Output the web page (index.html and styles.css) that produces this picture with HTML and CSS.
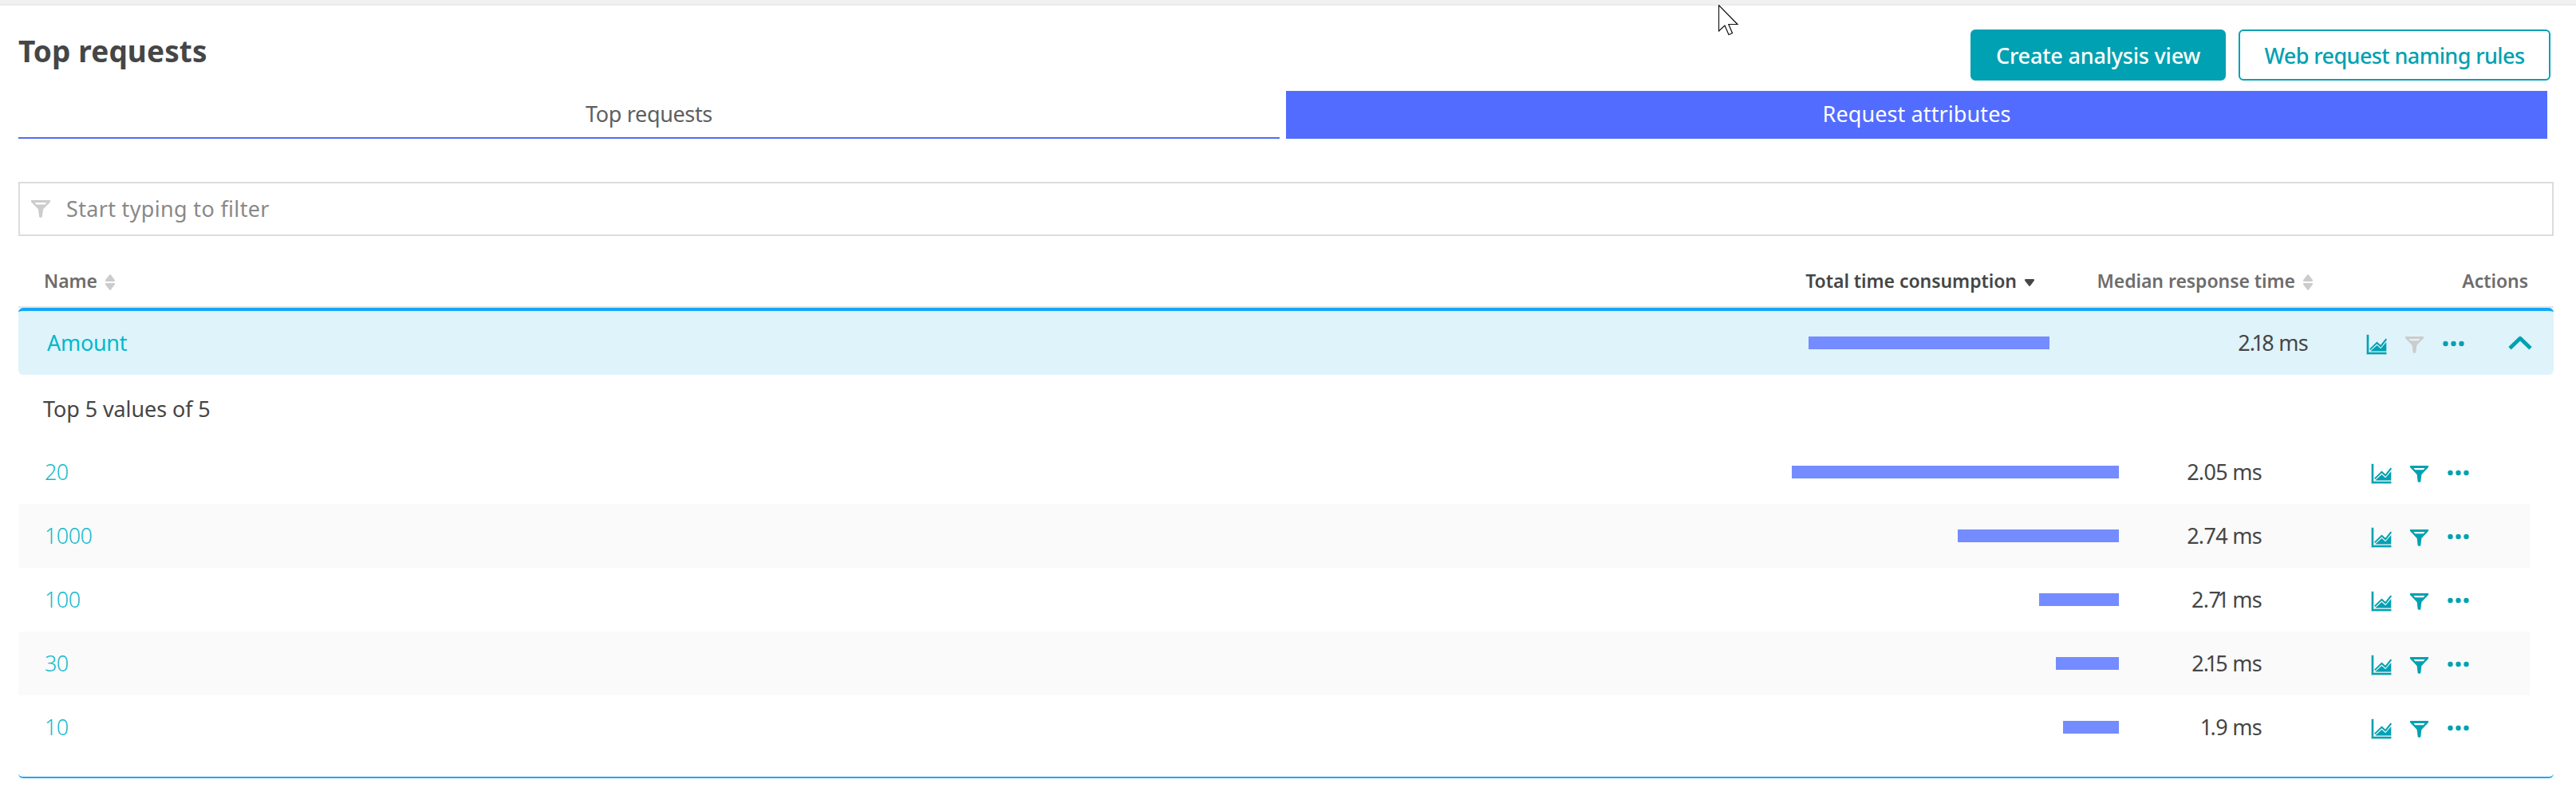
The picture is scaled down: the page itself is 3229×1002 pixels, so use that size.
FILE: index.html
```html
<!DOCTYPE html>
<html lang="en">
<head>
<meta charset="utf-8">
<title>Top requests</title>
<link rel="stylesheet" href="styles.css">
</head>
<body>
<svg class="sprite" aria-hidden="true">
  <symbol id="chart" viewBox="0 0 26 26">
    <path d="M1.9 0.6V24.1H25.5" fill="none" stroke="currentColor" stroke-opacity=".35" stroke-width="3.6"/>
    <path d="M2 0.9V24H25.3" fill="none" stroke="currentColor" stroke-width="2.1"/>
    <path d="M4.7 19.4L13.5 10.9L18.2 15.2L25.3 6.2" fill="none" stroke="currentColor" stroke-width="2"/>
    <path d="M5.2 21.5L13.5 14.1L18.2 18.2L25.3 10V21.5Z" fill="currentColor"/>
  </symbol>
  <symbol id="funnel" viewBox="0 0 23 21">
    <path fill="currentColor" fill-rule="evenodd" d="M0 0H23V2L14.4 11L13.3 20C13.2 21 9.8 21 9.7 20L8.6 11L0 2ZM4.4 2.9L6.3 5.2H16.7L18.6 2.9Z"/>
  </symbol>
  <symbol id="dots" viewBox="0 0 27 8">
    <g fill="currentColor"><circle cx="3.5" cy="4" r="3.2"/><circle cx="13.5" cy="4" r="3.2"/><circle cx="23.5" cy="4" r="3.2"/></g>
  </symbol>
  <symbol id="sort" viewBox="0 0 12 20">
    <path fill="currentColor" d="M5.2 .5Q6 -.4 6.8 .5L11.8 7Q12.4 9 11 9H1Q-.4 9 .2 7ZM5.2 19.5Q6 20.4 6.8 19.5L11.8 13Q12.4 11 11 11H1Q-.4 11 .2 13Z"/>
  </symbol>
  <symbol id="sorted" viewBox="0 0 12 20">
    <path fill="currentColor" d="M5.2 14.5Q6 15.4 6.8 14.5L11.8 8Q12.4 6 11 6H1Q-.4 6 .2 8Z"/>
  </symbol>
</svg>
<svg class="pointer" viewBox="0 0 26 40"><path d="M.5 .5V33L8 26L13 37.5L17.5 35.5L12.8 24.5H24Z" fill="#fff" stroke="#111" stroke-width="1.2"/></svg>
<div class="topbar"></div>
<main class="page">
  <header class="head">
    <h1 class="title">Top requests</h1>
    <div class="buttons">
      <button class="btn btn-primary">Create analysis view</button>
      <button class="btn btn-outline">Web request naming rules</button>
    </div>
  </header>
  <nav class="tabs">
    <a class="tab">Top requests</a>
    <a class="tab tab-active">Request attributes</a>
  </nav>
  <div class="filter">
    <svg class="funnel"><use href="#funnel"/></svg>
    <span>Start typing to filter</span>
  </div>
  <section class="table">
    <div class="cols thead">
      <div class="th">Name<svg class="sort"><use href="#sort"/></svg></div>
      <div class="th th-total">Total time consumption<svg class="sort"><use href="#sorted"/></svg></div>
      <div class="th th-end">Median response time<svg class="sort"><use href="#sort"/></svg></div>
      <div class="th th-actions">Actions</div>
    </div>
    <div class="cols group">
      <a class="group-name">Amount</a>
      <div class="bar-cell"><div class="bar" style="width:302px"></div></div>
      <div class="value">2.<span class="one">1</span>8 ms</div>
      <div class="actions">
        <svg class="chart"><use href="#chart"/></svg>
        <svg class="funnel funnel-off"><use href="#funnel"/></svg>
        <svg class="dots"><use href="#dots"/></svg>
        <svg class="chevron" viewBox="0 0 30 18"><path d="M2 15.8L15 3.2L28 15.8" fill="none" stroke="currentColor" stroke-width="4.8" stroke-linejoin="round"/></svg>
      </div>
    </div>
    <div class="details">
      <p class="caption">Top 5 values of 5</p>
      <div class="row">
        <a class="row-name">20</a>
        <div class="bar-cell"><div class="bar" style="width:410px"></div></div>
        <div class="value">2.05 ms</div>
        <div class="actions"><svg class="chart"><use href="#chart"/></svg><svg class="funnel"><use href="#funnel"/></svg><svg class="dots"><use href="#dots"/></svg></div>
      </div>
      <div class="row">
        <a class="row-name">1000</a>
        <div class="bar-cell"><div class="bar" style="width:202px"></div></div>
        <div class="value">2.74 ms</div>
        <div class="actions"><svg class="chart"><use href="#chart"/></svg><svg class="funnel"><use href="#funnel"/></svg><svg class="dots"><use href="#dots"/></svg></div>
      </div>
      <div class="row">
        <a class="row-name">100</a>
        <div class="bar-cell"><div class="bar" style="width:100px"></div></div>
        <div class="value">2.7<span class="one">1</span> ms</div>
        <div class="actions"><svg class="chart"><use href="#chart"/></svg><svg class="funnel"><use href="#funnel"/></svg><svg class="dots"><use href="#dots"/></svg></div>
      </div>
      <div class="row">
        <a class="row-name">30</a>
        <div class="bar-cell"><div class="bar" style="width:79px"></div></div>
        <div class="value">2.<span class="one">1</span>5 ms</div>
        <div class="actions"><svg class="chart"><use href="#chart"/></svg><svg class="funnel"><use href="#funnel"/></svg><svg class="dots"><use href="#dots"/></svg></div>
      </div>
      <div class="row">
        <a class="row-name">10</a>
        <div class="bar-cell"><div class="bar" style="width:70px"></div></div>
        <div class="value"><span class="one">1</span>.9 ms</div>
        <div class="actions"><svg class="chart"><use href="#chart"/></svg><svg class="funnel"><use href="#funnel"/></svg><svg class="dots"><use href="#dots"/></svg></div>
      </div>
    </div>
  </section>
</main>
</body>
</html>
```
FILE: styles.css
```css
* { box-sizing: border-box; }
body {
  margin: 0;
  background: #fff;
  color: #454646;
  font: 27px "Noto Sans", "Open Sans", sans-serif;
}
svg { display: block; flex: none; }
.sprite { position: absolute; width: 0; height: 0; }
.pointer { position: absolute; left: 2154px; top: 6px; width: 26px; height: 40px; }
.topbar { height: 7px; background: #f1f1f1; border-bottom: 2px solid #ebebeb; }
.page { padding: 30px 28px 0 23px; }

.head { display: flex; justify-content: space-between; height: 77px; padding-right: 4px; }
.title { margin: 0; font-size: 37px; line-height: 53px; font-weight: 700; letter-spacing: .1px; }
.buttons { display: flex; gap: 16px; }
.btn {
  height: 64px;
  padding: 0;
  border: 2px solid #00a1b2;
  border-radius: 6px;
  font: inherit;
  font-weight: 500;
}
.btn-primary { width: 320px; background: #00a1b2; color: #fff; letter-spacing: -.2px; }
.btn-outline { width: 391px; background: #fff; color: #00a1b2; letter-spacing: -.6px; }

.tabs { display: flex; gap: 8px; height: 60px; padding-right: 8px; }
.tab {
  flex: 1;
  border-bottom: 2px solid #526cff;
  line-height: 58px;
  text-align: center;
  color: #5e5f5f;
  letter-spacing: -.35px;
}
.tab-active { background: #526cff; color: #fff; letter-spacing: .1px; }

.filter {
  display: flex;
  align-items: center;
  gap: 20px;
  height: 68px;
  margin-top: 54px;
  padding: 0 14px 1px;
  border: 2px solid #dcdcdc;
  color: #898989;
  letter-spacing: .33px;
}
.filter .funnel { width: 24px; height: 22px; color: #ccc; }

.cols { display: grid; grid-template-columns: 1fr 369px 330px 302px; align-items: center; }
.thead { height: 90px; padding-top: 24px; border-bottom: 2px solid #e5e5e5; }
.th {
  display: flex;
  align-items: center;
  gap: 10px;
  padding-left: 32px;
  font-size: 23px;
  font-weight: 600;
  line-height: 24px;
  letter-spacing: -.05px;
  white-space: nowrap;
  color: #6d6d6d;
}
.sort { width: 12px; height: 20px; margin-top: 3px; color: #ccc; }
.th-total { justify-content: flex-end; padding: 0 19px 0 0; color: #454646; }
.th-total .sort { color: #454646; }
.th-end { justify-content: flex-end; padding: 0; }
.th-actions { justify-content: flex-end; padding: 0 32px 0 0; }

.group { height: 84px; border-top: 4px solid #14a8f5; border-radius: 6px; background: #dff3fb; }
.group-name { padding: 0 0 2px 36px; color: #00b9cc; letter-spacing: -.3px; }
.bar-cell { display: flex; justify-content: flex-end; }
.bar { height: 16px; background: #748cff; }
.value { padding: 0 6px 2px 0; text-align: right; letter-spacing: -.7px; }
.one { margin: 0 -2px -0 -4px; }
.actions { display: flex; align-items: center; padding-left: 67px; color: #00a1b2; }
.chart { width: 26px; height: 26px; margin-top: 3px; }
.actions .funnel { width: 23px; height: 21px; margin: 4px 0 0 23px; }
.actions .funnel-off { color: #ccc; }
.dots { width: 27px; height: 8px; margin: 2px 0 0 24px; }
.chevron { width: 30px; height: 18px; margin-left: 55px; }

.details { height: 506px; border-bottom: 2px solid #1ca9f4; border-radius: 6px; }
.caption { height: 82px; margin: 0; padding-left: 31px; line-height: 85px; letter-spacing: -.1px; }
.row {
  display: grid;
  grid-template-columns: 1fr 410px 180px 335px;
  align-items: center;
  height: 80px;
  margin-right: 30px;
}
.row:nth-child(odd) { background: #fafafa; }
.row-name { padding: 0 0 2px 33px; color: #12bccd; font-weight: 300; letter-spacing: -.6px; }
.row .value { padding-right: 1px; }
.row .actions { padding-left: 136px; }
```
